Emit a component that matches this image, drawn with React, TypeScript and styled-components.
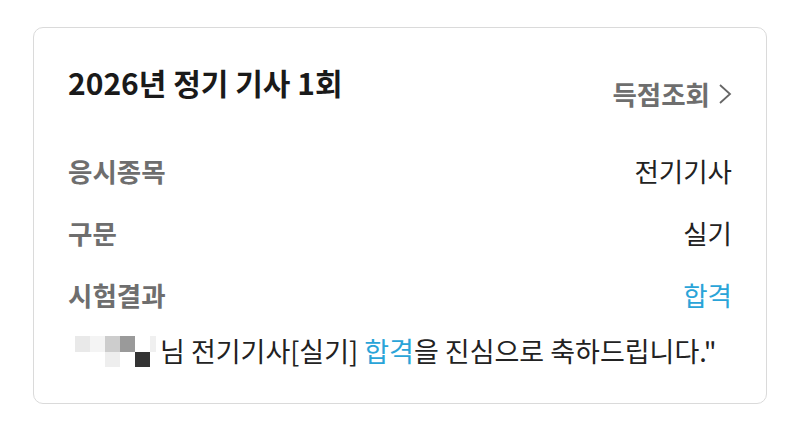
import React from 'react';
import styled, { createGlobalStyle } from 'styled-components';

const GlobalStyle = createGlobalStyle`
	html, body {
		margin: 0;
		padding: 0;
		background: #ffffff;
	}
	body {
		font-family: "Noto Sans CJK KR", "Noto Sans", sans-serif;
		color: #222222;
	}
`;

const Page = styled.main`
	padding: 27px 33px 0 33px;
`;

const StyledCard = styled.section`
	box-sizing: border-box;
	height: 377px;
	border: 1.5px solid #dadada;
	border-radius: 10px;
	padding: 34px 34px 0 34px;
`;

const Header = styled.header`
	display: flex;
	justify-content: space-between;
	align-items: flex-start;
`;

const Title = styled.h1`
	margin: 0;
	font-size: 30px;
	line-height: 40px;
	font-weight: 700;
	color: #1a1a1a;
`;

const ScoreLink = styled.a`
	display: flex;
	align-items: center;
	gap: 8px;
	margin-top: 12px;
	font-size: 26.5px;
	line-height: 40px;
	font-weight: 600;
	color: #6e6e6e;
	text-decoration: none;
	cursor: pointer;
`;

const InfoList = styled.dl`
	margin: 25px 0 0 0;
`;

const InfoRow = styled.div`
	display: flex;
	justify-content: space-between;
	align-items: center;
	height: 62px;
`;

const Label = styled.dt`
	font-size: 26.5px;
	font-weight: 600;
	color: #6e6e6e;
`;

const Value = styled.dd<{ $accent?: boolean }>`
	margin: 0;
	font-size: 26.5px;
	font-weight: 400;
	color: ${p => (p.$accent ? '#2aa4d8' : '#222222')};
`;

const Message = styled.p`
	display: flex;
	align-items: center;
	margin: 6px 0 0 0;
	padding-left: 7px;
	font-size: 27px;
	line-height: 40px;
	color: #222222;
	white-space: nowrap;
`;

const Accent = styled.span`
	color: #2aa4d8;
`;

const Mosaic = styled.span`
	display: inline-grid;
	grid-template-columns: repeat(5, 15px) 6px;
	grid-template-rows: 16px 15px;
	margin-right: 4px;
`;

const Cell = styled.span<{ $tone: string }>`
	background: ${p => p.$tone};
`;

const mosaicTones = [
	'#e9e9e9', '#f4f4f4', '#cdcdcd', '#9a9a9a', '#ffffff', '#f0f0f0',
	'#ffffff', '#ffffff', '#eeeeee', '#ffffff', '#333333', '#ffffff',
];

const Chevron = () => (
	<svg width="14" height="22" viewBox="0 0 14 22" fill="none">
		<path d="M2 2 L12 11 L2 20" stroke="#666666" strokeWidth="1.8" strokeLinejoin="miter" />
	</svg>
);

const rows = [
	{ label: '응시종목', value: '전기기사' },
	{ label: '구문', value: '실기' },
	{ label: '시험결과', value: '합격', accent: true },
];

const App: React.FC = () => {
	return (
		<>
			<GlobalStyle />
			<Page>
				<StyledCard>
					<Header>
						<Title>2026년 정기 기사 1회</Title>
						<ScoreLink>
							득점조회
							<Chevron />
						</ScoreLink>
					</Header>
					<InfoList>
						{rows.map(row => (
							<InfoRow key={row.label}>
								<Label>{row.label}</Label>
								<Value $accent={row.accent}>{row.value}</Value>
							</InfoRow>
						))}
					</InfoList>
					<Message>
						<Mosaic>
							{mosaicTones.map((tone, i) => (
								<Cell key={i} $tone={tone} />
							))}
						</Mosaic>
						님 전기기사[실기]&nbsp;<Accent>합격</Accent>을 진심으로 축하드립니다."
					</Message>
				</StyledCard>
			</Page>
		</>
	);
};

export default App;
